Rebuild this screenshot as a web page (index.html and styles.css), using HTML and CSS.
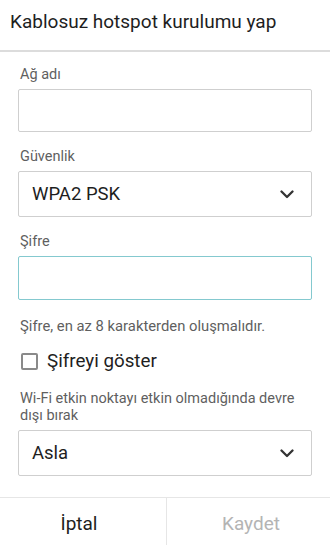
FILE: index.html
```html
<!DOCTYPE html>
<html lang="tr">
<head>
<meta charset="utf-8">
<link rel="stylesheet" href="styles.css">
</head>
<body>
<div class="dialog">
  <div class="title">Kablosuz hotspot kurulumu yap</div>
  <div class="content">
    <div class="label first">Ağ adı</div>
    <div class="box box-name"></div>

    <div class="label">Güvenlik</div>
    <div class="box select">
      <span class="value">WPA2 PSK</span>
      <svg class="chev" width="14" height="9" viewBox="0 0 14 9"><path d="M1.5 1.5 L7 7 L12.5 1.5" fill="none" stroke="#333" stroke-width="2.3" stroke-linecap="round" stroke-linejoin="round"/></svg>
    </div>

    <div class="label">Şifre</div>
    <div class="box box-pass"></div>

    <div class="helper">Şifre, en az 8 karakterden oluşmalıdır.</div>

    <div class="check-row">
      <span class="checkbox"></span>
      <span class="check-label">Şifreyi göster</span>
    </div>

    <div class="label wrap">Wi-Fi etkin noktayı etkin olmadığında devre dışı bırak</div>
    <div class="box select select-asla">
      <span class="value">Asla</span>
      <svg class="chev" width="14" height="9" viewBox="0 0 14 9"><path d="M1.5 1.5 L7 7 L12.5 1.5" fill="none" stroke="#333" stroke-width="2.3" stroke-linecap="round" stroke-linejoin="round"/></svg>
    </div>
  </div>
  <div class="buttons">
    <div class="btn btn-cancel">İptal</div>
    <div class="btn btn-save disabled">Kaydet</div>
  </div>
</div>
</body>
</html>
```
FILE: styles.css
```css
html, body {
  margin: 0;
  padding: 0;
  background: #ffffff;
}
body {
  font-family: Roboto, "Noto Sans", sans-serif;
  color: #222;
  width: 330px;
  height: 545px;
  overflow: hidden;
}
.dialog {
  display: flex;
  flex-direction: column;
  height: 545px;
}
.title {
  height: 50px;
  line-height: 44px;
  padding-left: 10px;
  font-size: 19px;
  color: #1e1e1e;
  border-bottom: 2px solid #dcdcdc;
}
.content {
  padding: 0 18px;
  flex: 1;
}
.label {
  font-size: 14.5px;
  line-height: 20px;
  color: #5f5f5f;
  padding-left: 2px;
  margin-top: 15px;
  margin-bottom: 4px;
}
.label.first {
  margin-top: 13px;
}
.label.wrap {
  line-height: 17px;
  margin-top: 17px;
  margin-bottom: 6px;
}
.box {
  box-sizing: border-box;
  border: 1px solid #cfcfcf;
  border-radius: 2px;
  height: 43px;
}
.select {
  height: 46px;
  display: flex;
  align-items: center;
  justify-content: space-between;
  padding: 0 17px 0 13px;
}
.value {
  font-size: 18.5px;
  color: #1e1e1e;
}
.chev {
  display: block;
}
.box-pass {
  height: 44px;
  border-color: #84c9cf;
}
.helper {
  font-size: 14.8px;
  line-height: 18px;
  color: #5f5f5f;
  padding-left: 2px;
  margin-top: 17px;
}
.check-row {
  display: flex;
  align-items: center;
  margin-top: 14px;
  height: 24px;
  padding-left: 3px;
}
.checkbox {
  box-sizing: border-box;
  width: 17px;
  height: 17px;
  border: 2px solid #8a8a8a;
  border-radius: 2px;
  margin-right: 9px;
}
.check-label {
  font-size: 18.8px;
  color: #1e1e1e;
}
.buttons {
  display: flex;
  border-top: 1px solid #e6e6e6;
  height: 47px;
}
.btn {
  flex: 1;
  display: flex;
  align-items: center;
  justify-content: center;
  font-size: 19px;
  color: #1e1e1e;
  padding-top: 4px;
}
.btn-cancel {
  padding-right: 8px;
}
.btn-save {
  padding-left: 5px;
}
.btn + .btn {
  border-left: 1px solid #e6e6e6;
}
.btn.disabled {
  color: #b4b4b4;
}
```
